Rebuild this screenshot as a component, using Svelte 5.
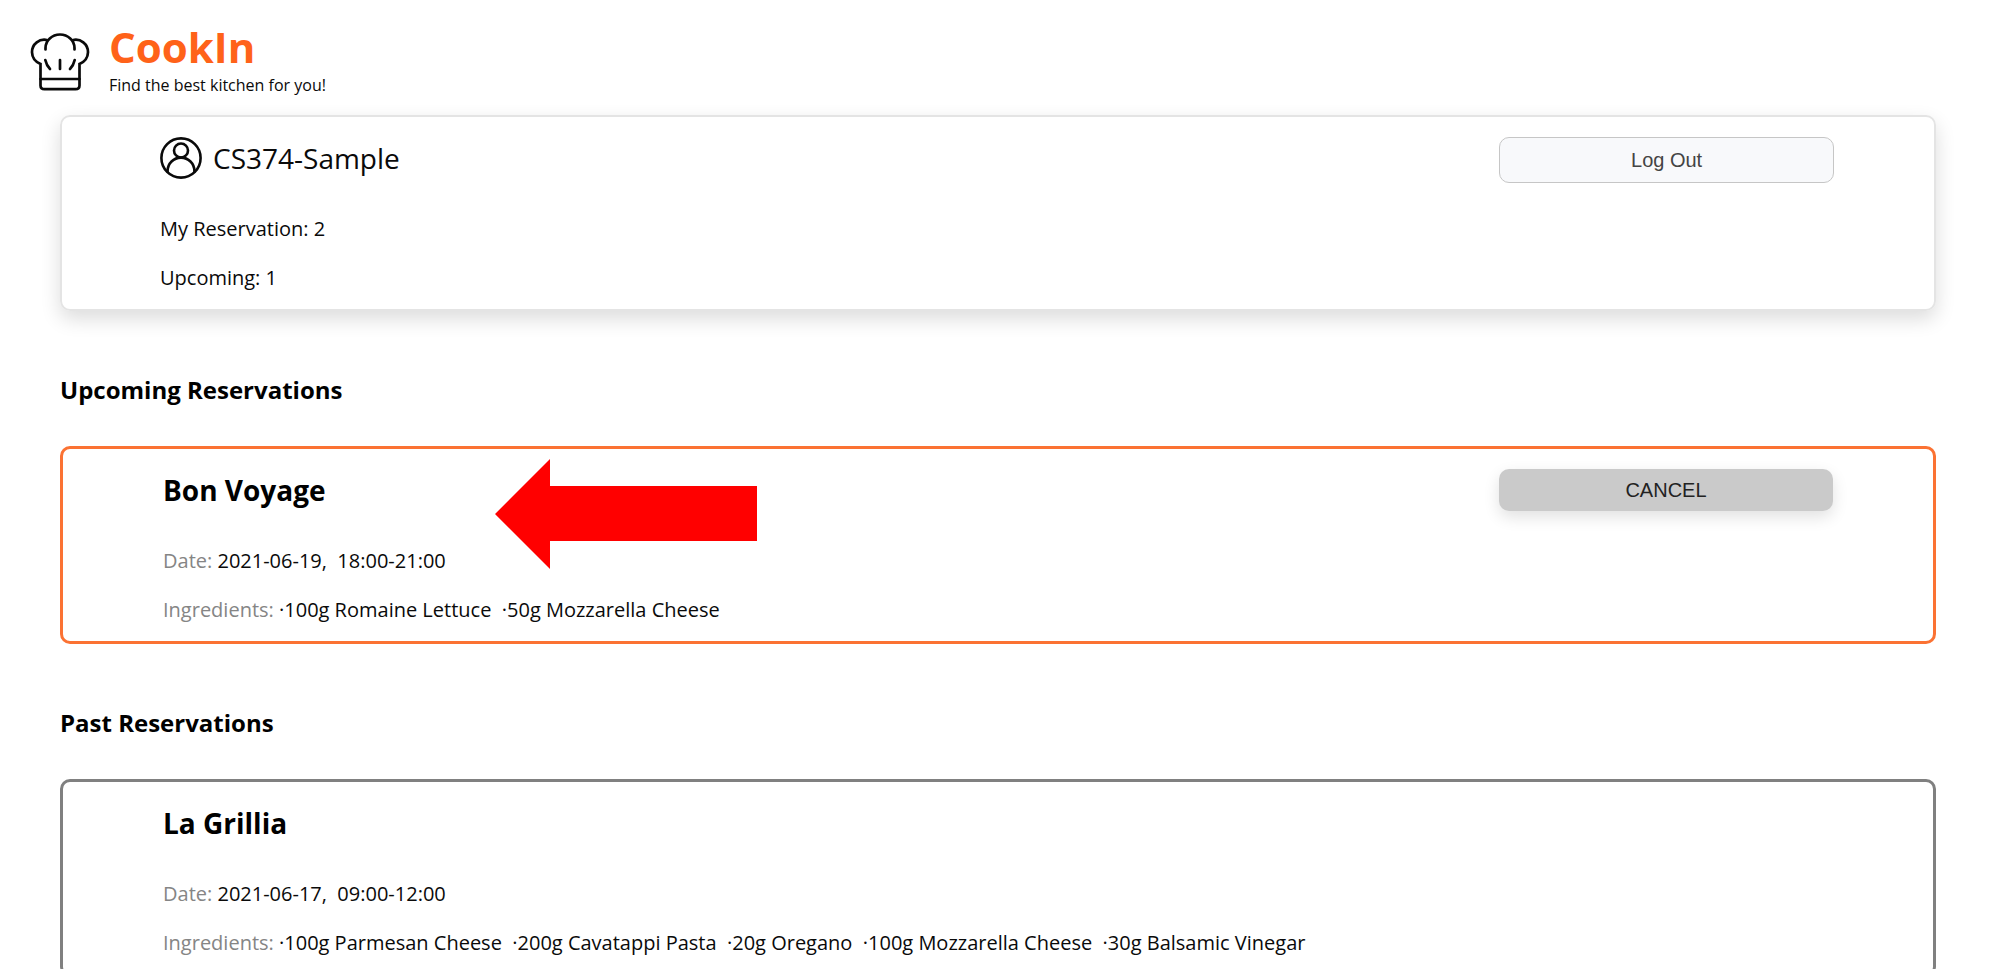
<script>
  const user = { name: 'CS374-Sample', reservations: 2, upcoming: 1 };

  const sections = [
    {
      title: 'Upcoming Reservations',
      kind: 'upcoming',
      items: [
        {
          kitchen: 'Bon Voyage',
          date: '2021-06-19',
          time: '18:00-21:00',
          ingredients: ['100g Romaine Lettuce', '50g Mozzarella Cheese'],
          marked: true
        }
      ]
    },
    {
      title: 'Past Reservations',
      kind: 'past',
      items: [
        {
          kitchen: 'La Grillia',
          date: '2021-06-17',
          time: '09:00-12:00',
          ingredients: [
            '100g Parmesan Cheese',
            '200g Cavatappi Pasta',
            '20g Oregano',
            '100g Mozzarella Cheese',
            '30g Balsamic Vinegar'
          ],
          marked: false
        }
      ]
    }
  ];
</script>

<div class="page">
  <header class="brand">
    <svg class="hat" viewBox="30 32 60 60" aria-hidden="true">
      <path d="M45.5 49.5V48A14.5 13.5 0 0 1 74.5 48V49.5" />
      <path d="M47.5 40.2A12.3 12.3 0 0 0 32 52.3Q32.2 60.5 40.5 64V85.5Q40.5 89.2 44.5 89.2H75.5Q79.5 89.2 79.5 85.5V64Q87.8 60.5 88 52.3A12.3 12.3 0 0 0 72.5 40.2" />
      <path d="M40.5 79H79.5M45.3 60Q46.5 65.5 50 69M60 60V69M74.7 60Q73.5 65.5 70 69" />
    </svg>
    <div>
      <h1>CookIn</h1>
      <p class="tagline">Find the best kitchen for you!</p>
    </div>
  </header>

  <main>
    <section class="card profile">
      <div class="head">
        <div class="user">
          <svg class="avatar" viewBox="0 0 42 42" aria-hidden="true">
            <circle cx="21" cy="21" r="19.6" />
            <circle cx="21" cy="13.5" r="7" />
            <path d="M7.6 35.6V34A13.4 13.4 0 0 1 34.4 34V35.6" />
          </svg>
          <span class="name">{user.name}</span>
        </div>
        <button class="logout" type="button">Log Out</button>
      </div>
      <p class="line">My Reservation: {user.reservations}</p>
      <p class="line">Upcoming: {user.upcoming}</p>
    </section>

    {#each sections as section}
      <section>
        <h2>{section.title}</h2>
        {#each section.items as item}
          <article class="card {section.kind}">
            <div class="head">
              <h3>{item.kitchen}</h3>
              {#if section.kind === 'upcoming'}
                <button class="cancel" type="button">CANCEL</button>
              {/if}
            </div>
            <p class="line"><span class="label">Date:</span> {item.date},&nbsp; {item.time}</p>
            <p class="line">
              <span class="label">Ingredients:</span>
              {item.ingredients.map((ingredient) => '·' + ingredient).join('\u00a0 ')}
            </p>
            {#if item.marked}
              <svg class="arrow" viewBox="0 0 262 110" aria-hidden="true">
                <path d="M0 55L55 0V27H262V82H55V110Z" />
              </svg>
            {/if}
          </article>
        {/each}
      </section>
    {/each}
  </main>
</div>

<style>
  :global(body) {
    background: #fff;
    overflow: hidden;
  }

  .page {
    font-family: 'Open Sans', 'Noto Sans', sans-serif;
    font-size: 20px;
    color: #0a0a0a;
  }

  h1,
  h2,
  h3,
  p {
    margin: 0;
  }

  .brand {
    display: flex;
    align-items: flex-start;
    gap: 19px;
    height: 91px;
    padding: 24px 30px 0;
  }

  .hat {
    width: 60px;
    height: 60px;
    margin-top: 8px;
    fill: none;
    stroke: #0a0a0a;
    stroke-width: 2.7;
    stroke-linecap: round;
  }

  h1 {
    font-size: 42px;
    line-height: 46px;
    color: #ff6219;
  }

  .tagline {
    font-size: 16px;
    line-height: 30px;
  }

  main {
    padding: 0 64px 40px 60px;
  }

  .card {
    position: relative;
    box-sizing: border-box;
    padding: 0 100px 7px;
    border-radius: 10px;
  }

  .profile {
    padding-left: 98px;
    border: 2px solid #e4e4e4;
    box-shadow: 0 8px 20px rgba(0, 0, 0, 0.14);
  }

  .upcoming {
    border: 3px solid #fb7233;
  }

  .past {
    border: 3px solid #808080;
  }

  .head {
    display: flex;
    align-items: flex-start;
    justify-content: space-between;
    box-sizing: border-box;
    height: 87px;
    padding-top: 20px;
  }

  .user {
    display: flex;
    align-items: center;
    gap: 11px;
  }

  .avatar {
    width: 42px;
    height: 42px;
    fill: none;
    stroke: #0a0a0a;
    stroke-width: 2.6;
  }

  .name {
    font-size: 28px;
    line-height: 42px;
  }

  h2 {
    padding: 24px 0 1px;
    font-size: 24px;
    line-height: 110px;
    color: #000;
  }

  h3 {
    font-size: 28px;
    line-height: 42px;
    color: #000;
  }

  .line {
    line-height: 49px;
  }

  .label {
    color: #858585;
  }

  button {
    width: 20%;
    border-radius: 10px;
    font-family: 'Liberation Sans', Arial, sans-serif;
    font-size: 20px;
    cursor: pointer;
  }

  .logout {
    height: 46px;
    border: 1px solid #c6c6c6;
    background: #f8f9fb;
    color: #444;
  }

  .cancel {
    height: 42px;
    border: 0;
    background: #cacaca;
    color: #222;
    box-shadow: 0 6px 16px rgba(0, 0, 0, 0.12);
  }

  .arrow {
    position: absolute;
    top: 10px;
    left: 432px;
    width: 262px;
    height: 110px;
    fill: #f00;
  }
</style>
